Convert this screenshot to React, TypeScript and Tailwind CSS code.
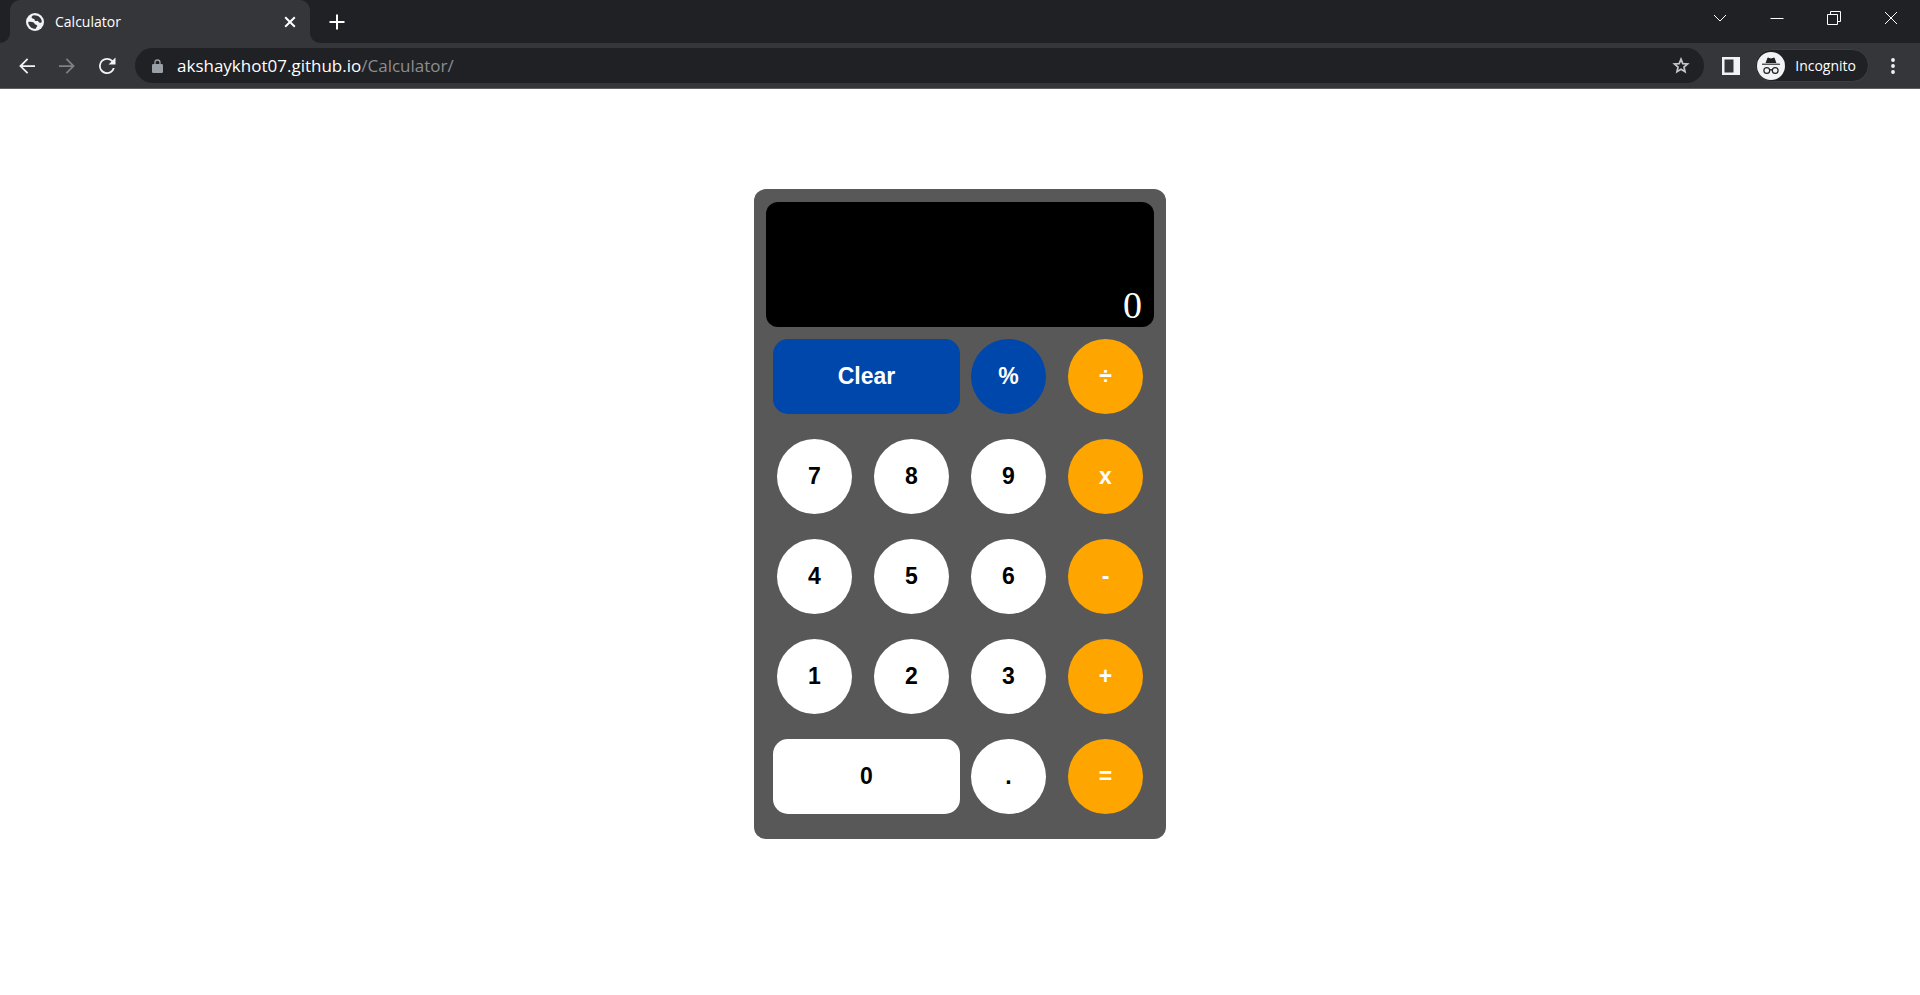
import { useState } from "react";

type KeyKind = "number" | "function" | "operator";

type KeyDef = { label: string; kind: KeyKind; wide?: boolean };

const KEYS: KeyDef[] = [
  { label: "Clear", kind: "function", wide: true },
  { label: "%", kind: "function" },
  { label: "÷", kind: "operator" },
  { label: "7", kind: "number" },
  { label: "8", kind: "number" },
  { label: "9", kind: "number" },
  { label: "x", kind: "operator" },
  { label: "4", kind: "number" },
  { label: "5", kind: "number" },
  { label: "6", kind: "number" },
  { label: "-", kind: "operator" },
  { label: "1", kind: "number" },
  { label: "2", kind: "number" },
  { label: "3", kind: "number" },
  { label: "+", kind: "operator" },
  { label: "0", kind: "number", wide: true },
  { label: ".", kind: "number" },
  { label: "=", kind: "operator" },
];

const KEY_COLORS: Record<KeyKind, string> = {
  number: "bg-white text-black",
  function: "bg-[#0047ab] text-white",
  operator: "bg-[#ffa500] text-white",
};

function compute(a: number, op: string, b: number): number {
  if (op === "+") return a + b;
  if (op === "-") return a - b;
  if (op === "x") return a * b;
  return a / b;
}

function Calculator() {
  const [display, setDisplay] = useState("0");
  const [stored, setStored] = useState<number | null>(null);
  const [operator, setOperator] = useState<string | null>(null);
  const [fresh, setFresh] = useState(true);

  const press = ({ label, kind }: KeyDef) => {
    if (label === "Clear") {
      setDisplay("0");
      setStored(null);
      setOperator(null);
      setFresh(true);
    } else if (label === "%") {
      setDisplay(String(Number(display) / 100));
      setFresh(true);
    } else if (kind === "number") {
      if (label === "." && !fresh && display.includes(".")) return;
      if (fresh) setDisplay(label === "." ? "0." : label);
      else setDisplay(display + label);
      setFresh(false);
    } else {
      const current = Number(display);
      const result = operator !== null && stored !== null ? compute(stored, operator, current) : current;
      setDisplay(String(result));
      setStored(label === "=" ? null : result);
      setOperator(label === "=" ? null : label);
      setFresh(true);
    }
  };

  return (
    <section aria-label="Calculator" className="w-[412px] rounded-xl bg-[#585858] px-3 pt-[13px]">
      <output className="flex h-[125px] items-end justify-end overflow-hidden rounded-xl bg-black px-3 font-['Liberation_Serif',serif] text-[38px] leading-[44px] text-white">
        {display}
      </output>
      <div className="mt-3 grid grid-cols-4">
        {KEYS.map((key) => (
          <div key={key.label} className={key.wide ? "col-span-2 flex h-[100px] justify-end" : "flex h-[100px] justify-center"}>
            <button
              type="button"
              onClick={() => press(key)}
              className={`h-[75px] text-[23px] font-bold ${key.wide ? "w-[187px] rounded-[15px]" : "w-[75px] rounded-full"} ${KEY_COLORS[key.kind]}`}
            >
              {key.label}
            </button>
          </div>
        ))}
      </div>
    </section>
  );
}

const WINDOW_BUTTONS = [
  { label: "Search tabs", path: "M1 4l6 6 6-6" },
  { label: "Minimize", path: "M0.500 7.500h13" },
  { label: "Restore", path: "M0.500 3.500h10v10h-10zM3.500 3.500v-3h10v10h-3" },
  { label: "Close window", path: "M1 1l12 12M13 1L1 13" },
];

function TabStrip() {
  return (
    <div className="flex h-[43px] bg-[#202124]">
      <div className="w-[10px] bg-[#35363a]">
        <div className="h-full rounded-br-[10px] bg-[#202124]" />
      </div>
      <div className="flex w-[300px] items-center rounded-t-[10px] bg-[#35363a] pr-[10px] pl-4">
        <svg viewBox="0 0 18 18" className="h-[18px] w-[18px]" aria-hidden="true">
          <circle cx="9" cy="9" r="9" fill="#f1f3f4" />
          <g fill="#35363a">
            <path d="M8 2.200C6.200 2.400 5.300 3.600 5.700 4.700c.4 1 1.700.7 2.500 1.200.9.6.2 1.700 1.200 2.100 1 .4 1.500-.4 2.400-.1.900.4.9 1.700 2 1.900.8.1 1.500-.3 2-.9C15.700 5 12.500 2.100 8 2.200Z" />
            <path d="M2.200 9c1.500-.5 4-.3 5.400.4 1.200.6.8 1.700 1.900 2.200.9.400 1.500.3 1.700 1.100.2 1-.9 1.300-1.100 2-.1.500 0 .9-.2 1.100C5.500 16 2.200 12.800 2.200 9Z" />
          </g>
        </svg>
        <span className="ml-[11px] flex-1 text-[14px] leading-4 text-white">Calculator</span>
        <button type="button" aria-label="Close tab" className="flex h-5 w-5 items-center justify-center text-white">
          <svg viewBox="0 0 12 12" className="h-3 w-3" fill="none" stroke="currentColor" strokeWidth="2" aria-hidden="true">
            <path d="M1.200 1.200l9.600 9.600M10.800 1.200l-9.600 9.600" />
          </svg>
        </button>
      </div>
      <div className="flex-1 bg-[#35363a]">
        <div className="flex h-full items-center justify-between rounded-bl-[10px] bg-[#202124]">
          <button type="button" aria-label="New tab" className="ml-[17px] flex h-5 w-5 items-center justify-center text-white">
            <svg viewBox="0 0 16 16" className="h-4 w-4" fill="none" stroke="currentColor" strokeWidth="2" aria-hidden="true">
              <path d="M8 0.500v15M0.500 8h15" />
            </svg>
          </button>
          <div className="flex h-full items-start pr-px">
            {WINDOW_BUTTONS.map(({ label, path }) => (
              <button key={label} type="button" aria-label={label} className="flex h-9 w-[57px] items-center justify-center text-white">
                <svg viewBox="0 0 14 14" className="h-[14px] w-[14px]" fill="none" stroke="currentColor" aria-hidden="true">
                  <path d={path} />
                </svg>
              </button>
            ))}
          </div>
        </div>
      </div>
    </div>
  );
}

function NavButton({ label, dim, children }: { label: string; dim?: boolean; children: React.ReactNode }) {
  return (
    <button
      type="button"
      aria-label={label}
      disabled={dim}
      className={`flex h-8 w-10 items-center justify-center ${dim ? "text-[#808184]" : "text-[#f1f3f4]"}`}
    >
      <svg viewBox="0 0 24 24" className="h-6 w-6" fill="currentColor" aria-hidden="true">
        {children}
      </svg>
    </button>
  );
}

function Toolbar() {
  return (
    <div className="flex h-[46px] items-center border-b border-[#5f6063] bg-[#35363a] pr-[15px] pl-[7px] text-white">
      <NavButton label="Back">
        <path d="M20 11.200H7.600l5.600-5.700L12 4.200 4.200 12l7.800 7.800 1.200-1.200-5.600-5.700H20z" />
      </NavButton>
      <NavButton label="Forward" dim>
        <path d="M4 11.200h12.400l-5.600-5.700L12 4.200l7.800 7.800-7.800 7.800-1.200-1.200 5.600-5.700H4z" />
      </NavButton>
      <NavButton label="Reload">
        <path d="M17.650 6.350A7.960 7.960 0 0 0 12 4a8 8 0 1 0 7.730 10h-1.900A6.200 6.200 0 1 1 12 5.800c1.700 0 3.240.690 4.350 1.850L13.500 10.500H20.500V3.500z" />
      </NavButton>
      <div className="ml-2 flex h-[35px] flex-1 items-center rounded-full bg-[#202124] pr-[14px] pl-[17px]">
        <svg viewBox="0 0 11 14" className="h-[14px] w-[11px]" aria-hidden="true">
          <path d="M3 6V3.500a2.500 2.500 0 0 1 5 0V6" fill="none" stroke="#9aa0a6" strokeWidth="1.300" />
          <rect y="5" width="11" height="9" rx="1.200" fill="#9aa0a6" />
        </svg>
        <a href="#" className="ml-[14px] flex-1 text-[17px] leading-5 text-[#8b8e92]">
          <span className="text-white">akshaykhot07.github.io</span>/Calculator/
        </a>
        <button type="button" aria-label="Bookmark this tab" className="flex h-[18px] w-[18px] items-center justify-center text-[#c4c7ca]">
          <svg viewBox="2 2 20 20" className="h-[18px] w-[18px]" fill="none" stroke="currentColor" strokeWidth="1.900" aria-hidden="true">
            <path d="M12 4.400l2 4.900 5.300.450-4 3.500 1.200 5.150L12 15.700l-4.500 2.700 1.200-5.150-4-3.500L10 9.300z" />
          </svg>
        </button>
      </div>
      <button type="button" aria-label="Side panel" className="ml-[18px] h-[18px] w-[18px]">
        <svg viewBox="0 0 18 18" className="h-[18px] w-[18px]" aria-hidden="true">
          <path d="M0 0h18v18H0zM2.500 2.500v13h9v-13z" fill="#f1f3f4" fillRule="evenodd" />
        </svg>
      </button>
      <button type="button" className="ml-[15px] flex h-[33px] items-center rounded-full border border-[#3e3f43] bg-[#202124] pr-3 pl-px text-[14px]">
        <svg viewBox="0 0 28 28" className="h-7 w-7" aria-hidden="true">
          <circle cx="14" cy="14" r="14" fill="#f1f3f4" />
          <path d="M10.300 6.200c.2-.5.700-.7 1.200-.5l2.500.8 2.500-.8c.5-.2 1 0 1.200.5l1.700 4.700H8.600z" fill="#202124" />
          <path d="M5 12.200h18" stroke="#202124" strokeWidth="1.100" />
          <g fill="none" stroke="#202124" strokeWidth="1.200">
            <circle cx="9.800" cy="18.500" r="2.900" />
            <circle cx="18.200" cy="18.500" r="2.900" />
            <path d="M12.700 18.200c.8-.6 1.800-.6 2.600 0" />
          </g>
        </svg>
        <span className="ml-[10px]">Incognito</span>
      </button>
      <button type="button" aria-label="Menu" className="ml-3 flex h-6 w-6 items-center justify-center">
        <svg viewBox="0 0 4 16" className="h-4 w-1" fill="#f1f3f4" aria-hidden="true">
          <circle cx="2" cy="2" r="1.900" />
          <circle cx="2" cy="8" r="1.900" />
          <circle cx="2" cy="14" r="1.900" />
        </svg>
      </button>
    </div>
  );
}

export default function App() {
  return (
    <div className="min-h-screen bg-white font-['Open_Sans',sans-serif]">
      <header>
        <TabStrip />
        <Toolbar />
      </header>
      <main className="flex justify-center pt-[100px] font-['Liberation_Sans',sans-serif]">
        <Calculator />
      </main>
    </div>
  );
}
